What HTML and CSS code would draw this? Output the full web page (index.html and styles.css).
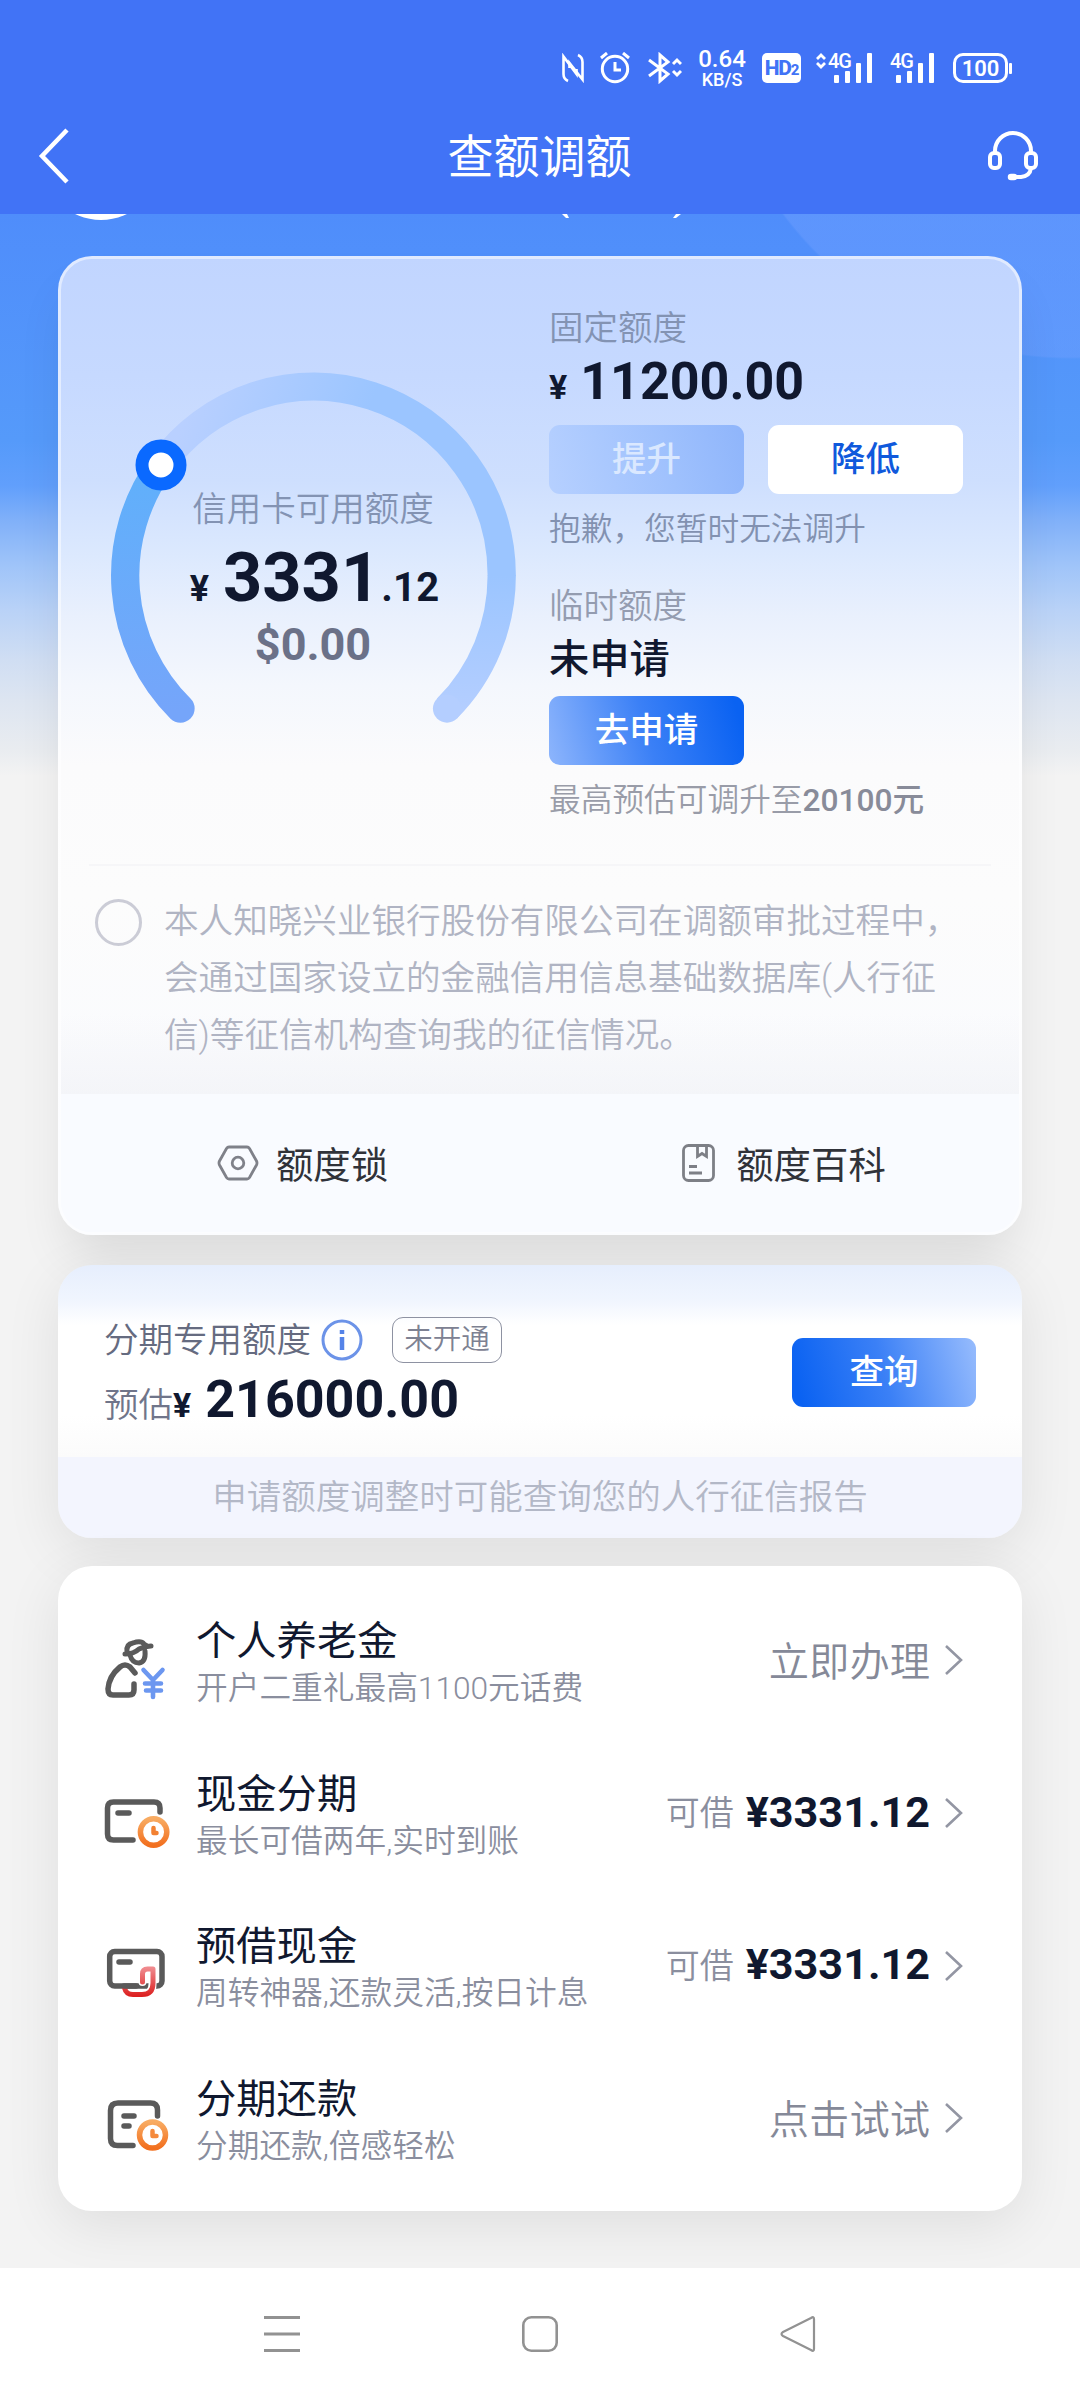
FILE: index.html
```html
<!DOCTYPE html>
<html lang="zh-CN">
<head>
<meta charset="utf-8">
<title>查额调额</title>
<link rel="stylesheet" href="styles.css">
</head>
<body>
<div class="screen">
  <header class="header">
    <div class="status">
      <svg class="st-nfc" width="22" height="30" viewBox="0 0 22 30" fill="none" stroke="#fff" stroke-width="2.600"><path d="M6 28Q1.500 26 1.500 21V3.500L14.500 21v-5"/><path d="M16 2Q20.500 4 20.500 9v17.500L7.500 10v5"/></svg>
      <svg class="st-alarm" width="30" height="32" viewBox="0 0 30 32" fill="none" stroke="#fff" stroke-width="3"><circle cx="15" cy="17" r="12.700"/><path d="M15 10v8h6M1 6l6-5M29 6l-6-5"/></svg>
      <svg class="st-bt" width="34" height="32" viewBox="0 0 34 32" fill="none" stroke="#fff" stroke-width="3"><path d="M1 8l19 14-8 7V3l8 7L1 24"/><path d="M25 12l4-4 4 4M25 19l4 4 4-4"/></svg>
      <div class="speed"><span>0.64</span><small>KB/S</small></div>
      <div class="hd">HD<small>2</small></div>
      <div class="signal">
        <svg width="10" height="16" viewBox="0 0 10 16" fill="none" stroke="#fff" stroke-width="2.800"><path d="M1 6l4-4 4 4M1 10l4 4 4-4"/></svg>
        <span class="net">4G</span>
        <svg class="bars" width="39" height="30" viewBox="0 0 39 30" fill="#fff"><rect y="22" width="5" height="8" rx="1"/><rect x="11" y="18" width="5" height="12" rx="1"/><rect x="22" y="10" width="5" height="20" rx="1"/><rect x="33" width="5" height="30" rx="1"/></svg>
      </div>
      <div class="signal second">
        <span class="net">4G</span>
        <svg class="bars" width="39" height="30" viewBox="0 0 39 30" fill="#fff"><rect y="22" width="5" height="8" rx="1"/><rect x="11" y="18" width="5" height="12" rx="1"/><rect x="22" y="10" width="5" height="20" rx="1"/><rect x="33" width="5" height="30" rx="1"/></svg>
      </div>
      <div class="battery"><b>100</b><i></i></div>
    </div>
    <div class="titlebar">
      <svg width="32" height="56" viewBox="0 0 32 56" fill="none" stroke="#fff" stroke-width="4.500"><path d="M30 2L5 28l25 26"/></svg>
      <h1>查额调额</h1>
      <svg width="52" height="52" viewBox="0 0 52 52" fill="none" stroke="#fff" stroke-width="4"><path d="M8 24v-3a18 18 0 0 1 36 0v3M44 38q-1 8-10 9h-6"/><rect x="3" y="23" width="10" height="15" rx="4"/><rect x="39" y="23" width="10" height="15" rx="4"/><rect x="22" y="45" width="7" height="4" rx="2" fill="#fff" stroke-width="2.500"/></svg>
    </div>
  </header>

  <main class="content">
    <div class="profile">
      <svg width="625" height="8" viewBox="0 0 625 8" fill="#fff"><circle cx="40" cy="-53" r="59"/><path d="M501 0h5l2 4-3 0zM620 0h-5l-3 4h3z"/></svg>
    </div>

    <section class="card quota">
      <div class="overview">
        <div class="gauge">
          <svg width="410" height="360" viewBox="0 0 410 360" fill="none" stroke-width="28.300">
            <defs>
              <linearGradient id="track" gradientUnits="userSpaceOnUse" x1="60" y1="90" x2="390" y2="200"><stop offset="0" stop-color="#b9d0ff"/><stop offset=".5" stop-color="#9bc5ff"/><stop offset="1" stop-color="#9bc5ff"/></linearGradient>
              <linearGradient id="trackEnd" gradientUnits="userSpaceOnUse" x1="0" y1="204" x2="0" y2="340"><stop offset="0" stop-color="#9bc5ff"/><stop offset="1" stop-color="#b4ceff"/></linearGradient>
              <linearGradient id="used" gradientUnits="userSpaceOnUse" x1="0" y1="100" x2="0" y2="340"><stop offset="0" stop-color="#60b0fb"/><stop offset="1" stop-color="#75a5fa"/></linearGradient>
            </defs>
            <path d="M52 94A188 188 0 0 1 392.700 204.700" stroke="url(#track)"/>
            <path d="M392.700 204A188 188 0 0 1 338 337.600" stroke="url(#trackEnd)"/>
            <circle cx="338" cy="337.600" r="14.100" fill="#b4ceff" stroke="none"/>
            <path d="M71.500 337.600A188 188 0 0 1 52 94" stroke="url(#used)" stroke-linecap="round"/>
            <circle cx="52" cy="94" r="19" stroke="#0a69ff" stroke-width="13" fill="#fff"/>
          </svg>
          <div class="gauge-text">
            <p class="label">信用卡可用额度</p>
            <p class="big"><span class="yen">¥</span>3331<span class="dec">.12</span></p>
            <p class="usd">$0.00</p>
          </div>
        </div>
        <div class="limits">
          <p class="label">固定额度</p>
          <p class="amount"><span class="yen">¥</span>11200.00</p>
          <div class="buttons"><button class="btn off">提升</button><button class="btn plain">降低</button></div>
          <p class="note">抱歉，您暂时无法调升</p>
          <p class="label temp">临时额度</p>
          <p class="state">未申请</p>
          <div class="buttons apply"><button class="btn go">去申请</button></div>
          <p class="note grey">最高预估可调升至<b>20100元</b></p>
        </div>
      </div>
      <div class="terms">
        <span class="check"></span>
        <p>本人知晓兴业银行股份有限公司在调额审批过程中，<br>会通过国家设立的金融信用信息基础数据库(人行征<br>信)等征信机构查询我的征信情况。</p>
      </div>
      <div class="links">
        <a><svg width="42" height="36" viewBox="0 0 42 36" fill="none" stroke="#7f8189" stroke-width="2.800"><path d="M12 2h18q1.500 0 2.500 1.500L39.500 16q1 2 0 4l-7 12.500q-1 1.500-2.500 1.500H12q-1.500 0-2.500-1.500L2.500 20q-1-2 0-4l7-12.500Q10.500 2 12 2z"/><circle cx="21" cy="18" r="5.800" /></svg>额度锁</a>
        <a><svg width="33" height="38" viewBox="0 0 33 38" fill="none" stroke="#7d7f86" stroke-width="2.800"><rect x="1.500" y="1.500" width="30" height="35" rx="5"/><path d="M15.500 2v10.500l4.500-3 4.500 3V2M7 22.500h8M7 29h13"/></svg>额度百科</a>
      </div>
    </section>

    <section class="card install">
      <div class="install-main">
        <div>
          <div class="install-head"><span>分期专用额度</span>
            <svg width="42" height="42" viewBox="0 0 42 42" fill="none" stroke="#6c93e8" stroke-width="3"><circle cx="21" cy="21" r="19"/><path d="M21 18v13M21 11v4" stroke-width="4.500" stroke="#5583e8"/></svg>
            <span class="tag">未开通</span></div>
          <p class="estimate">预估<span class="yen">¥</span><b>216000.00</b></p>
        </div>
        <button class="btn query">查询</button>
      </div>
      <p class="install-foot">申请额度调整时可能查询您的人行征信报告</p>
    </section>

    <section class="card services">
      <div class="row">
        <svg class="person" width="70" height="66" viewBox="0 0 70 66" fill="none" stroke="#5a5a5a" stroke-width="5" stroke-linecap="round" stroke-linejoin="round"><path d="M21 19q9 0 14-5 6-3 12-3M23 17q-1-8 6-9 8-3 11 1l3 2"/><path d="M26 20q2 8 9 8 7-1 6-12"/><path d="M31 38l-5-6q-5-4-10 0Q5 41 4 54q0 6 5 6h16q5 0 5-5v-6" stroke-width="5.500"/><path d="M39.500 35l9.500 10 9.500-10M49 46v16M41 48.500h16M42 55.500h15" stroke="#6c97f0" stroke-width="4.600"/></svg>
        <div class="info"><h2>个人养老金</h2><p>开户二重礼最高1100元话费</p></div>
        <span class="act">立即办理</span><svg class="chev" width="20" height="32" viewBox="0 0 20 32"><path d="M2 2l15 14L2 30"/></svg>
      </div>
      <div class="row">
        <svg width="70" height="70" viewBox="0 -2 70 70" fill="none" stroke="#5a5a5a" stroke-width="5.500" stroke-linecap="round" stroke-linejoin="round"><defs><linearGradient id="clock" x1="0" y1="0" x2="0" y2="1"><stop stop-color="#f8ab62"/><stop offset="1" stop-color="#f2701f"/></linearGradient></defs><path d="M56 31v-4q0-6-6-6H9.500q-6 0-6 6v26q0 6 6 6H29M14 32h11"/><circle cx="49.600" cy="51" r="13.200" stroke="url(#clock)"/><path d="M49.500 47v5h3" stroke="#f28132" stroke-width="4.500"/></svg>
        <div class="info"><h2>现金分期</h2><p>最长可借两年,实时到账</p></div>
        <span class="can">可借</span><b class="sum">¥3331.12</b><svg class="chev" width="20" height="32" viewBox="0 0 20 32"><path d="M2 2l15 14L2 30"/></svg>
      </div>
      <div class="row">
        <svg width="70" height="66" viewBox="0 0 70 66" fill="none" stroke="#5a5a5a" stroke-width="5.500" stroke-linecap="round" stroke-linejoin="round"><defs><linearGradient id="hook" gradientUnits="userSpaceOnUse" x1="0" y1="34" x2="0" y2="62"><stop stop-color="#f08a8e"/><stop offset="1" stop-color="#dc2020"/></linearGradient></defs><rect x="5.700" y="17.500" width="52.300" height="34.500" rx="5"/><path d="M15 28h11"/><path d="M38.500 48V38q0-4 4-4h6v16q0 11-11 11H30" stroke="#fff" stroke-width="8"/><path d="M38.500 48V40q0-5 5-5h5.500v14q0 11.500-11 11.500H29q-7 0-8.500-6.500" stroke="url(#hook)" stroke-width="5"/><path d="M20 52h12"/></svg>
        <div class="info"><h2>预借现金</h2><p>周转神器,还款灵活,按日计息</p></div>
        <span class="can">可借</span><b class="sum">¥3331.12</b><svg class="chev" width="20" height="32" viewBox="0 0 20 32"><path d="M2 2l15 14L2 30"/></svg>
      </div>
      <div class="row">
        <svg width="70" height="66" viewBox="0 0 70 66" fill="none" stroke="#5a5a5a" stroke-width="5.500" stroke-linecap="round" stroke-linejoin="round"><path d="M53.500 30v-6q0-7-7-7H14q-7.500 0-7.500 7.500v28q0 7 7 7H29M20 30h10M20 40h5"/><circle cx="48.500" cy="49" r="13" stroke="url(#clock)"/><path d="M48.500 45v5h4" stroke="#f58a3c" stroke-width="4.500"/></svg>
        <div class="info"><h2>分期还款</h2><p>分期还款,倍感轻松</p></div>
        <span class="act">点击试试</span><svg class="chev" width="20" height="32" viewBox="0 0 20 32"><path d="M2 2l15 14L2 30"/></svg>
      </div>
    </section>
  </main>

  <nav class="nav">
    <svg width="36" height="38" viewBox="0 0 36 38" stroke="#929292" stroke-width="3"><path d="M0 2.500h36M0 19h36M0 35.500h36"/></svg>
    <svg width="36" height="38" viewBox="0 0 36 38" fill="none" stroke="#929292" stroke-width="2.600"><rect x="1.300" y="2.300" width="33.400" height="33.400" rx="8"/></svg>
    <svg width="36" height="38" viewBox="0 0 36 38" fill="none" stroke="#929292" stroke-width="2.200" stroke-linejoin="round"><path d="M31 3q3-2 3 1v30q0 3-3 1L3 21q-3-2 0-4z"/></svg>
  </nav>
</div>
</body>
</html>
```

FILE: styles.css
```css
* { box-sizing: border-box; }
body, h1, h2, p { margin: 0; font-weight: 400; }
body { font-family: Roboto, "Noto Sans CJK SC", sans-serif; color: #10182f; }
svg { display: block; flex: none; }

.screen { width: 1080px; height: 2400px; display: flex; flex-direction: column; overflow: hidden; }

/* header */
.header { height: 214px; background: #4173f6; color: #fff; flex: none; }
.status { height: 104px; padding: 32px 68px 0 0; display: flex; justify-content: flex-end; align-items: center; }
.st-nfc { margin-right: 16px; }
.st-alarm { margin-right: 18px; }
.st-bt { margin-right: 14px; }
.speed { width: 52px; display: flex; flex-direction: column; align-items: center; font-weight: 500; font-size: 24px; line-height: 23px; margin-right: 14px; }
.speed small { font-size: 18px; line-height: 18px; }
.hd { width: 39px; height: 30px; border-radius: 5px; background: #fff; color: #4173f6; font-size: 21px; font-weight: 800; line-height: 31px; text-align: center; letter-spacing: -1.2px; margin-right: 15px; }
.hd small { font-size: 15px; }
.signal { display: flex; align-items: flex-start; height: 30px; gap: 2px; }
.net { font-size: 20px; line-height: 16px; letter-spacing: -1px; width: 22px; font-weight: 500; }
.bars { margin-left: -18px; }
.signal.second { margin: 0 18px 0 17px; }
.battery { display: flex; align-items: center; gap: 1px; }
.battery b { width: 55px; height: 30px; border: 3px solid #fff; border-radius: 10px; font-size: 22px; line-height: 25px; text-align: center; font-weight: 600; }
.battery i { width: 3px; height: 11px; background: #fff; border-radius: 1px; }
.titlebar { height: 104px; padding: 0 41px 0 37px; display: grid; grid-template-columns: 52px 1fr 52px; align-items: center; }
.titlebar h1 { font-size: 46px; line-height: 60px; text-align: center; padding: 2px 0 0 3px; }

/* content */
.content {
  flex: 1; padding: 0 58px; display: flex; flex-direction: column; overflow: hidden;
  background:
    radial-gradient(circle at 1070px -214px, #6f9fff70 357px, #6f9fff00 359px),
    linear-gradient(#4f8dfb, #559afa 226px, #619ffc 272px, #80b0f9 306px, #9fc4f9 351px, #b9d2f7 396px, #d0def3 446px, #dde5f1 486px, #e9ecf0 536px, #f3f3f3 562px);
}
.profile { height: 42px; padding-left: 3px; flex: none; }
.card { border-radius: 34px; flex: none; overflow: hidden; box-shadow: 0 14px 56px rgba(0,0,0,.085); }

.quota { height: 979px; border: 3px solid rgba(255,255,255,.5); box-shadow: 0 30px 50px -10px rgba(0,0,0,.1);
  background: linear-gradient(#c1d5ff, #c6d9ff 120px, #cedffe 225px, #dce9fe 300px, #e9f0fd 360px, #f4f7fd 430px, #fbfbfc 510px, #fcfcfc 640px, #f8faff) border-box; }
.overview { height: 605px; padding: 0 30px 0 48px; display: flex; gap: 30px; }
.gauge { display: grid; width: 410px; padding-top: 112px; align-items: start; }
.gauge > * { grid-area: 1 / 1; }
.gauge-text { padding: 115px 2px 0 0; text-align: center; }
.label { font-size: 34.5px; line-height: 46px; font-weight: 350; color: #8393b3; }
.big { font-size: 68.500px; line-height: 80px; font-weight: 700; margin-top: 6px; white-space: nowrap; padding-left: 3px; }
.big .yen { font-size: 36px; margin-right: 14px; }
.big .dec { font-size: 40px; line-height: 0; letter-spacing: .2px; margin-left: 1px; }
.usd { font-size: 45px; line-height: 54px; font-weight: 700; color: #6b7188; }
.limits { padding-top: 46px; width: 440px; }
.amount { font-size: 52px; line-height: 58px; font-weight: 700; margin-top: 2px; }
.yen { font-size: 34px; line-height: 0; font-weight: 700; color: #10182f; }
.amount .yen { margin-right: 13px; }
.buttons { display: flex; gap: 24px; margin-top: 14px; }
.btn { width: 195px; height: 69px; border: 0; border-radius: 11px; padding: 0 0 2px; font: 500 34.5px/46px Roboto, "Noto Sans CJK SC", sans-serif; color: #fff; }
.off { background: linear-gradient(75deg, #b6d0ff, #9fc1fd 60%, #8fb5fb); color: #dae8ff; }
.plain { background: #fff; color: #1059dc; }
.go { background: linear-gradient(75deg, #8db5fc, #3b80f6 50%, #0a62f2 95%); }
.note { font-size: 31.7px; line-height: 44px; font-weight: 350; color: #8291b0; margin-top: 14px; white-space: nowrap; }
.note.grey { color: #999ca8; }
.note b { font-weight: 500; color: #888b99; }
.temp { margin-top: 31px; color: #949cb0; }
.state { font-size: 40.3px; line-height: 56px; font-weight: 500; margin-top: 3px; }
.apply { margin-top: 8px; }
.terms { height: 230px; padding: 29px 0 0 34px; display: flex; gap: 22px;
  background: linear-gradient(90deg, transparent 28px, #f6f6f8 28px 930px, transparent 930px) top / 100% 2px no-repeat, linear-gradient(#f2f3f700 150px, #f1f2f6aa); }
.check { width: 47px; height: 47px; margin-top: 6px; border: 3px solid #cbccd6; border-radius: 50%; flex: none; }
.terms p { font-size: 34.6px; line-height: 57px; font-weight: 350; color: #b0b4c3; white-space: nowrap; }
.links { height: 138px; background: #f9fbff; display: grid; grid-template-columns: 1fr 1fr; }
.links a { display: flex; align-items: center; justify-content: center; gap: 17px; font-size: 37.4px; color: #303239; padding: 0 0 0 4px; }
.links a + a { gap: 21px; padding-left: 9px; }

.install { margin-top: 30px; height: 273px; background: linear-gradient(#e6eefd, #f0f5fe 35px, #fff 60px, #fff 150px, #fbfbfb 192px, #f3f5fe 192px); }
.install-main { height: 192px; padding: 50px 46px 0; display: flex; justify-content: space-between; }
.install-head { height: 48px; display: flex; align-items: center; font-size: 34.5px; color: #656b80; font-weight: 350; }
.install-head > :first-child { margin-top: -4px; }
.install-head svg { margin: 2px 0 0 10px; }
.tag { margin: 2px 0 0 29px; height: 46px; width: 110px; border: 1.5px solid #8e92a2; border-radius: 11px; font-size: 28.5px; line-height: 43px; text-align: center; color: #7d8192; }
.estimate { font-size: 34.5px; line-height: 60px; margin-top: 12px; color: #70758a; font-weight: 350; white-space: nowrap; }
.estimate b { font-size: 52px; line-height: 0; color: #10182f; font-weight: 700; margin-left: 14px; }
.query { width: 184px; margin-top: 23px; background: linear-gradient(75deg, #0a62f2 5%, #3b80f6 50%, #97bcfd); }
.install-foot { text-align: center; font-size: 34.5px; line-height: 80px; font-weight: 350; color: #b3b8c7; }

.services { margin-top: 28px; height: 645px; padding: 19px 58px 0 46px; background: #fff; }
.row { height: 152.700px; display: flex; align-items: center; }
.person { margin-top: 14px; }
.info { flex: 1; padding: 3px 0 0 22px; }
.info h2 { font-size: 40.3px; line-height: 52px; }
.info p { font-size: 31.7px; line-height: 42px; font-weight: 350; color: #8a8e9e; white-space: nowrap; }
.act { font-size: 40.3px; font-weight: 350; color: #858998; padding-bottom: 5px; }
.can { font-size: 34px; font-weight: 350; color: #8a8e9e; margin-right: 12px; padding-bottom: 7px; }
.sum { font-size: 43.2px; font-weight: 700; padding-bottom: 4px; }
.chev { margin: -2px 0 0 14px; fill: none; stroke: #9396a3; stroke-width: 2.6; }

.nav { height: 132px; flex: none; background: #fff; display: flex; justify-content: space-between; padding: 47px 264px 0; }
```
